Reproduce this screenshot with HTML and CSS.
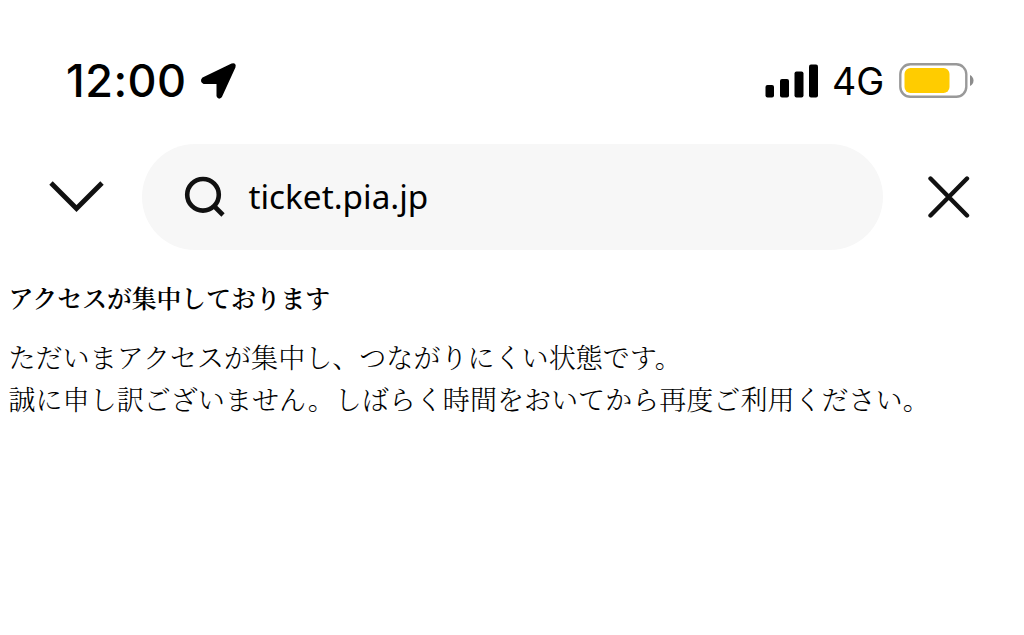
FILE: index.html
```html
<!DOCTYPE html>
<html lang="ja">
<head>
    <meta charset="UTF-8">
    <meta name="viewport" content="width=device-width, initial-scale=1.0">
    <title>ticket.pia.jp</title>
    <link rel="stylesheet" href="styles.css">
</head>
<body>
    <div class="status-bar">
        <span class="time">12:00</span>
        <svg class="location" width="38" height="38" viewBox="0 0 38 38">
            <path d="M4 16.5 L33 2.500 Q36.500 1.500 35.500 5 L22 34.500 Q19.500 37 18.500 34 V21 H5 Q1.500 19.500 4 16.500 Z" fill="#000" stroke="#000" stroke-width="2" stroke-linejoin="round"/>
        </svg>
        <svg class="signal" width="54" height="34" viewBox="0 0 54 34">
            <rect x="0.500" y="21" width="8.500" height="12.500" rx="2"/>
            <rect x="15" y="15" width="9" height="18.500" rx="2"/>
            <rect x="29.500" y="7.500" width="9" height="26" rx="2"/>
            <rect x="44" y="0.500" width="9" height="33" rx="2"/>
        </svg>
        <span class="network">4G</span>
        <svg class="battery" width="76" height="36" viewBox="0 0 76 36">
            <rect x="1.300" y="1.300" width="66" height="32.500" rx="10" fill="none" stroke="#999" stroke-width="2.400"/>
            <rect x="5.500" y="5" width="45" height="25" rx="6" fill="#ffcc00"/>
            <path d="M71 12 Q74.500 14 74.500 17.500 Q74.500 21 71 23 Z" fill="#8c8c8c"/>
        </svg>
    </div>
    <div class="browser-bar">
        <svg class="chevron" width="56" height="34" viewBox="0 0 56 34">
            <path d="M2 3 L27.500 28.500 L53 3" fill="none" stroke="#111" stroke-width="4.800"/>
        </svg>
        <div class="address">
            <svg class="search" width="42" height="42" viewBox="0 0 42 42">
                <circle cx="19" cy="18.800" r="15.800" fill="none" stroke="#111" stroke-width="4.600"/>
                <path d="M29.500 29.500 L39 39" stroke="#111" stroke-width="4.600"/>
            </svg>
            <span class="url">ticket.pia.jp</span>
        </div>
        <svg class="close" width="42" height="42" viewBox="0 0 42 42">
            <path d="M2.500 2.500 L39 39.500 M39 2.500 L2.500 39.500" stroke="#111" stroke-width="4.400" stroke-linecap="round"/>
        </svg>
    </div>
    <main>
        <h1>アクセスが集中しております</h1>
        <p>ただいまアクセスが集中し、つながりにくい状態です。<br>誠に申し訳ございません。しばらく時間をおいてから再度ご利用ください。</p>
    </main>
</body>
</html>
```

FILE: styles.css
```css
body {
    margin: 0;
    background-color: #fff;
    color: #000;
}
svg {
    display: block;
    flex-shrink: 0;
}
.status-bar {
    display: flex;
    align-items: center;
    height: 36px;
    padding: 63px 49px 0 66px;
    font-family: Inter, "Liberation Sans", sans-serif;
}
.time {
    width: 133px;
    font-size: 45px;
    font-weight: 550;
    letter-spacing: 0.5px;
    line-height: 36px;
}
.signal {
    margin-left: auto;
}
.network {
    width: 67px;
    margin-left: 13px;
    padding-top: 2px;
    font-size: 37.5px;
    font-weight: 400;
    line-height: 36px;
}
.browser-bar {
    display: flex;
    align-items: center;
    height: 106px;
    margin-top: 45px;
    padding: 0 54px 0 49px;
}
.address {
    display: flex;
    align-items: center;
    width: 741px;
    height: 106px;
    margin-left: 37px;
    border-radius: 53px;
    background-color: #f7f7f7;
}
.search {
    margin-left: 42px;
}
.url {
    margin-left: 22.5px;
    padding-bottom: 2px;
    font-family: "Noto Sans", sans-serif;
    font-size: 33.3px;
    line-height: 44px;
}
.close {
    margin-left: auto;
}
main {
    padding: 29px 0 0 8.5px;
    font-family: "Noto Serif CJK JP", "Noto Serif JP", "Noto Sans CJK JP", serif;
}
h1 {
    margin: 0;
    font-size: 24.8px;
    font-weight: 600;
    line-height: 36px;
}
p {
    margin: 21px 0 0;
    font-size: 27.05px;
    font-weight: 300;
    line-height: 42px;
    white-space: nowrap;
}
```
